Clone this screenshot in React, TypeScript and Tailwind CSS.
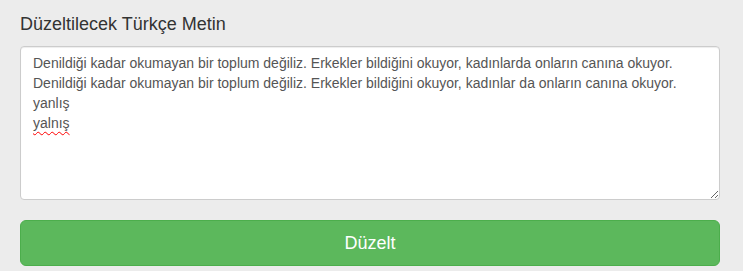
export default function App() {
  return (
    <div className="min-h-screen bg-[#ececec] pl-5 pr-[23px] pt-[11px] font-['Liberation_Sans',Arial,sans-serif]">
      {/* Label */}
      <label className="block text-[18px] leading-[26px] text-[#333] mb-[9px]">Düzeltilecek Türkçe Metin</label>

      {/* Text box */}
      <div className="h-[154px] w-full resize-y overflow-auto rounded border border-[#ccc] bg-white px-3 py-1.5 text-[14px] leading-5 text-[#555] shadow-[inset_0_1px_1px_rgba(0,0,0,0.075)]">
        <div>Denildiği kadar okumayan bir toplum değiliz. Erkekler bildiğini okuyor, kadınlarda onların canına okuyor.</div>
        <div>Denildiği kadar okumayan bir toplum değiliz. Erkekler bildiğini okuyor, kadınlar da onların canına okuyor.</div>
        <div>yanlış</div>
        <div>
          <span className="underline decoration-wavy decoration-[#f00] decoration-1 underline-offset-[3px]">yalnış</span>
        </div>
      </div>

      {/* Button */}
      <button className="mt-5 block w-full rounded-md border border-[#4cae4c] bg-[#5cb85c] px-4 py-2.5 text-[18px] leading-6 text-white">
        Düzelt
      </button>
    </div>
  )
}
